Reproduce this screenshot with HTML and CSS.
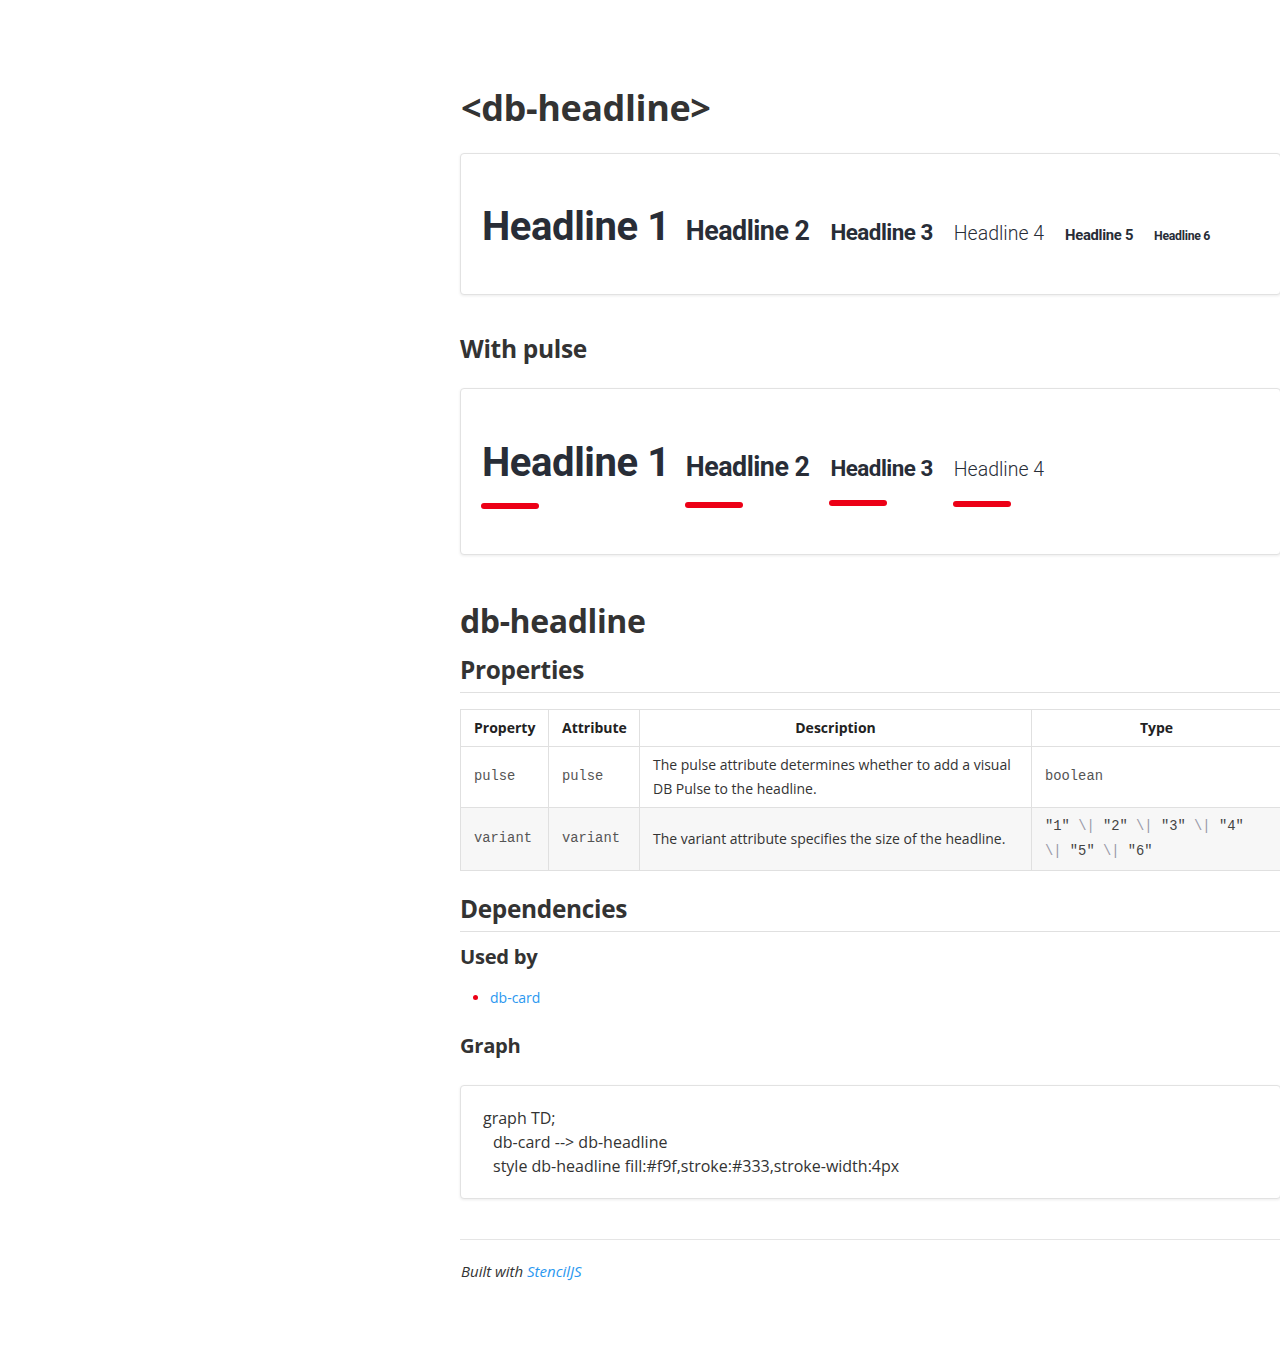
FILE: index.html
```html
<!DOCTYPE html>
<html lang="en">
<head>
<meta charset="utf-8">
<title>db-headline</title>
<link rel="stylesheet" href="styles.css">
</head>
<body>
<main class="page">
  <h1 class="page-title">&lt;db-headline&gt;</h1>

  <section class="card demo">
    <div class="demo-row">
      <div class="hl hl-1">Headline 1</div>
      <div class="hl hl-2">Headline 2</div>
      <div class="hl hl-3">Headline 3</div>
      <div class="hl hl-4">Headline 4</div>
      <div class="hl hl-5">Headline 5</div>
      <div class="hl hl-6">Headline 6</div>
    </div>
  </section>

  <h3 class="section-title">With pulse</h3>

  <section class="card demo demo-pulse">
    <div class="demo-row">
      <div class="hl-wrap"><div class="hl hl-1">Headline 1</div><span class="pulse pulse-1"></span></div>
      <div class="hl-wrap"><div class="hl hl-2">Headline 2</div><span class="pulse pulse-2"></span></div>
      <div class="hl-wrap"><div class="hl hl-3">Headline 3</div><span class="pulse pulse-3"></span></div>
      <div class="hl-wrap"><div class="hl hl-4">Headline 4</div><span class="pulse pulse-4"></span></div>
    </div>
  </section>

  <h2 class="doc-title">db-headline</h2>
  <h3 class="doc-sub ruled">Properties</h3>

  <table class="props">
    <thead>
      <tr><th class="c-prop">Property</th><th class="c-attr">Attribute</th><th class="c-desc">Description</th><th class="c-type">Type</th></tr>
    </thead>
    <tbody>
      <tr>
        <td><code>pulse</code></td>
        <td><code>pulse</code></td>
        <td>The pulse attribute determines whether to add a visual DB Pulse to the headline.</td>
        <td><code>boolean</code></td>
      </tr>
      <tr class="alt">
        <td><code>variant</code></td>
        <td><code>variant</code></td>
        <td>The variant attribute specifies the size of the headline.</td>
        <td><code class="type">"1" <span class="esc">\|</span> "2" <span class="esc">\|</span> "3" <span class="esc">\|</span> "4"<br><span class="esc">\|</span> "5" <span class="esc">\|</span> "6"</code></td>
      </tr>
    </tbody>
  </table>

  <h3 class="doc-sub ruled deps">Dependencies</h3>
  <h4 class="doc-minor used">Used by</h4>
  <ul class="deps-list">
    <li><a href="#">db-card</a></li>
  </ul>
  <h4 class="doc-minor graph-title">Graph</h4>

  <section class="card graph">
    <div class="graph-line">graph TD;</div>
    <div class="graph-line indent">db-card --&gt; db-headline</div>
    <div class="graph-line indent">style db-headline fill:#f9f,stroke:#333,stroke-width:4px</div>
  </section>

  <hr class="rule">
  <p class="footer">Built with <a href="#">StencilJS</a></p>
</main>
</body>
</html>
```

FILE: styles.css
```css
html, body {
  margin: 0;
  padding: 0;
  background: #fff;
  overflow-x: hidden;
}
body {
  font-family: "Open Sans", "Liberation Sans", sans-serif;
  color: #333;
}
.page {
  margin-left: 460px;
  width: 821px;
  padding-top: 88px;
  padding-bottom: 60px;
}
.page-title {
  font-size: 36px;
  line-height: 40px;
  font-weight: 700;
  margin: 0 0 25px 1px;
  letter-spacing: -0.4px;
}
.card {
  border: 1px solid #e2e2e2;
  border-radius: 4px;
  box-shadow: 0 1px 3px rgba(0, 0, 0, 0.08);
  background: #fff;
}
.demo {
  height: 140px;
  box-sizing: content-box;
  padding: 0 21px;
  display: flex;
}
.demo-row {
  display: flex;
  align-items: baseline;
  gap: 21px;
  padding-top: 53px;
}
.demo-pulse { height: 165px; }
.demo-pulse .demo-row { padding-top: 54px; }
.hl {
  font-family: Roboto, "Noto Sans", sans-serif;
  color: #282d37;
  font-weight: 700;
  line-height: 1;
  white-space: nowrap;
  letter-spacing: -0.5px;
}
.hl-1 { font-size: 40px; letter-spacing: -0.4px; margin-right: -5px; }
.hl-2 { font-size: 26.8px; }
.hl-3 { font-size: 22.4px; }
.hl-4 { font-size: 19.5px; font-weight: 300; letter-spacing: 0; }
.hl-5 { font-size: 14.8px; letter-spacing: -0.3px; }
.hl-6 { font-size: 12.3px; letter-spacing: -0.3px; }
.hl-wrap {
  display: flex;
  flex-direction: column;
  align-items: flex-start;
}
.hl-wrap .hl-1 { margin-right: 0; }
.hl-wrap:first-child { margin-right: -5px; }
.pulse {
  display: block;
  width: 58px;
  height: 6px;
  border-radius: 3px;
  background: #ec0016;
  margin-left: -1px;
}
.pulse-1 { margin-top: 20px; }
.pulse-2 { margin-top: 21px; }
.pulse-3 { margin-top: 21px; }
.pulse-4 { margin-top: 21px; }

.section-title {
  font-size: 24.5px;
  line-height: 28px;
  font-weight: 700;
  margin: 40px 0 25px 0;
  letter-spacing: -0.3px;
}
.doc-title {
  font-size: 32px;
  line-height: 40px;
  font-weight: 700;
  margin: 46px 0 0 0;
  letter-spacing: -0.4px;
}
.doc-sub {
  font-size: 24.4px;
  line-height: 30px;
  font-weight: 700;
  margin: 14px 0 0 0;
  letter-spacing: -0.3px;
}
.ruled {
  padding-bottom: 7px;
  border-bottom: 1px solid #e0e0e0;
}
.deps { margin-top: 23px; }
.doc-minor {
  font-size: 20.2px;
  line-height: 25px;
  font-weight: 700;
  margin: 0;
  letter-spacing: -0.3px;
}
.used { margin-top: 12px; }
.graph-title { margin-top: 23px; }

.props {
  margin-top: 16px;
  width: 822px;
  border-collapse: collapse;
  table-layout: fixed;
  font-size: 14px;
  line-height: 24px;
  color: #333;
}
.props th, .props td {
  box-sizing: border-box;
  border: 1px solid #e0e0e0;
  padding: 6px 13px;
  vertical-align: middle;
}
.c-prop { width: 88px; }
.c-attr { width: 91px; }
.c-desc { width: 392px; }
.props th {
  font-weight: 700;
  text-align: center;
  color: #222;
}
.props td {
  text-align: left;
}
.props .alt td { background: #f7f7f7; }
.props code {
  display: block;
  font-family: "Liberation Mono", "Courier New", monospace;
  font-size: 13.8px;
  line-height: 24px;
  color: #555;
}
.props .type {
  line-height: 25px;
  color: #444;
}
.props .esc { color: #9a9aa8; }

.deps-list {
  margin: 17px 0 0 0;
  padding-left: 30px;
  font-size: 14px;
  line-height: 24px;
}
.deps-list li::marker { color: #ec0016; }
a {
  color: #2b98f0;
  text-decoration: none;
}
.graph {
  margin-top: 27px;
  padding: 20px 22px 20px 22px;
  font-size: 16px;
  line-height: 24px;
  color: #333;
}
.graph-line.indent { padding-left: 10px; }
.rule {
  border: none;
  border-top: 1px solid #e5e5e5;
  margin: 40px 0 0 0;
}
.footer {
  margin: 21px 0 0 1px;
  font-size: 15px;
  line-height: 20px;
  font-style: italic;
}
```
